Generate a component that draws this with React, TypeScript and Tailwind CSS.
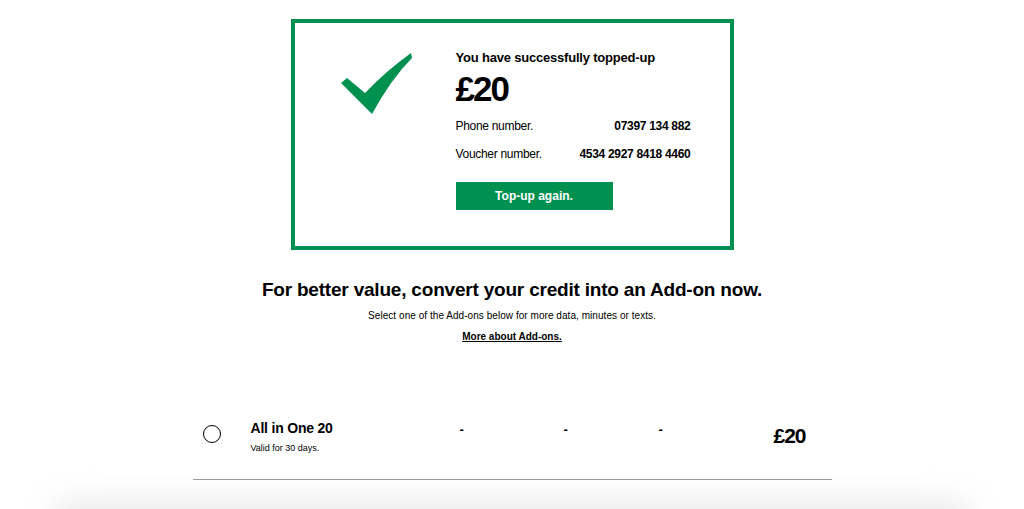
import React from "react";

export default function App() {
  return (
    <div
      className="relative w-[1024px] h-[509px] overflow-hidden bg-white text-black"
      style={{ fontFamily: '"Liberation Sans", Arial, sans-serif' }}
    >
      <div className="absolute left-[50px] right-[50px] top-[499px] h-[60px] rounded-[30px] bg-[#ebebeb] blur-[14px]" />
      <div className="relative flex flex-col items-center pt-[19px]">
        <div className="w-[443px] h-[231px] border-4 border-[#00904f] flex">
          <div className="w-[161px] shrink-0 pt-[26px] pl-[41px]">
            <svg width="80" height="70" viewBox="0 0 80 70">
              <path
                d="M5 34 L11 29 L29 44 Q50 22 75 4 L76 9 Q55 30 36 65 Z"
                fill="#00904f"
              />
            </svg>
          </div>
          <div className="w-[235px] pt-[27px] flex flex-col">
            <div className="text-[13px] leading-[16px] font-bold tracking-[-0.2px]">
              You have successfully topped-up
            </div>
            <div className="text-[35px] leading-[36px] font-bold tracking-[-2px] mt-[5px]">
              £20
            </div>
            <div className="flex justify-between text-[12px] leading-[14px] mt-[12px] tracking-[-0.3px]">
              <span>Phone number.</span>
              <span className="font-bold">07397 134 882</span>
            </div>
            <div className="flex justify-between text-[12px] leading-[14px] mt-[14px] tracking-[-0.3px]">
              <span>Voucher number.</span>
              <span className="font-bold">4534 2927 8418 4460</span>
            </div>
            <div className="mt-[21px] w-[157px] h-[28px] bg-[#00904f] text-white text-[12px] font-bold flex items-center justify-center">
              Top-up again.
            </div>
          </div>
        </div>

        <div className="mt-[28px] text-[19px] leading-[24px] font-bold tracking-[-0.2px]">
          For better value, convert your credit into an Add-on now.
        </div>
        <div className="mt-[7px] text-[10px] leading-[14px] tracking-[0.05px]">
          Select one of the Add-ons below for more data, minutes or texts.
        </div>
        <div className="mt-[7px] text-[10px] leading-[14px] font-bold underline">
          More about Add-ons.
        </div>

        <div className="mt-[69px] w-[639px] border-b border-[#999]">
          <div className="flex items-start h-[66px] pt-[7px]">
            <div className="w-[58px] pl-[10px] pt-[5px]">
              <div className="w-[18px] h-[18px] rounded-full border-[1.5px] border-black" />
            </div>
            <div className="w-[200px]">
              <div className="text-[14px] leading-[16px] font-bold tracking-[-0.2px]">
                All in One 20
              </div>
              <div className="text-[9px] leading-[12px] mt-[6px]">
                Valid for 30 days.
              </div>
            </div>
            <div className="w-[104px] text-[13px] font-bold leading-[16px] pl-[9px] pt-[2px]">-</div>
            <div className="w-[96px] text-[13px] font-bold leading-[16px] pl-[9px] pt-[2px]">-</div>
            <div className="w-[60px] text-[13px] font-bold leading-[16px] pl-[8px] pt-[2px]">-</div>
            <div className="flex-1 text-right pr-[26px] pt-[4px] text-[21px] leading-[24px] font-bold tracking-[-1px]">
              £20
            </div>
          </div>
        </div>
      </div>
    </div>
  );
}
